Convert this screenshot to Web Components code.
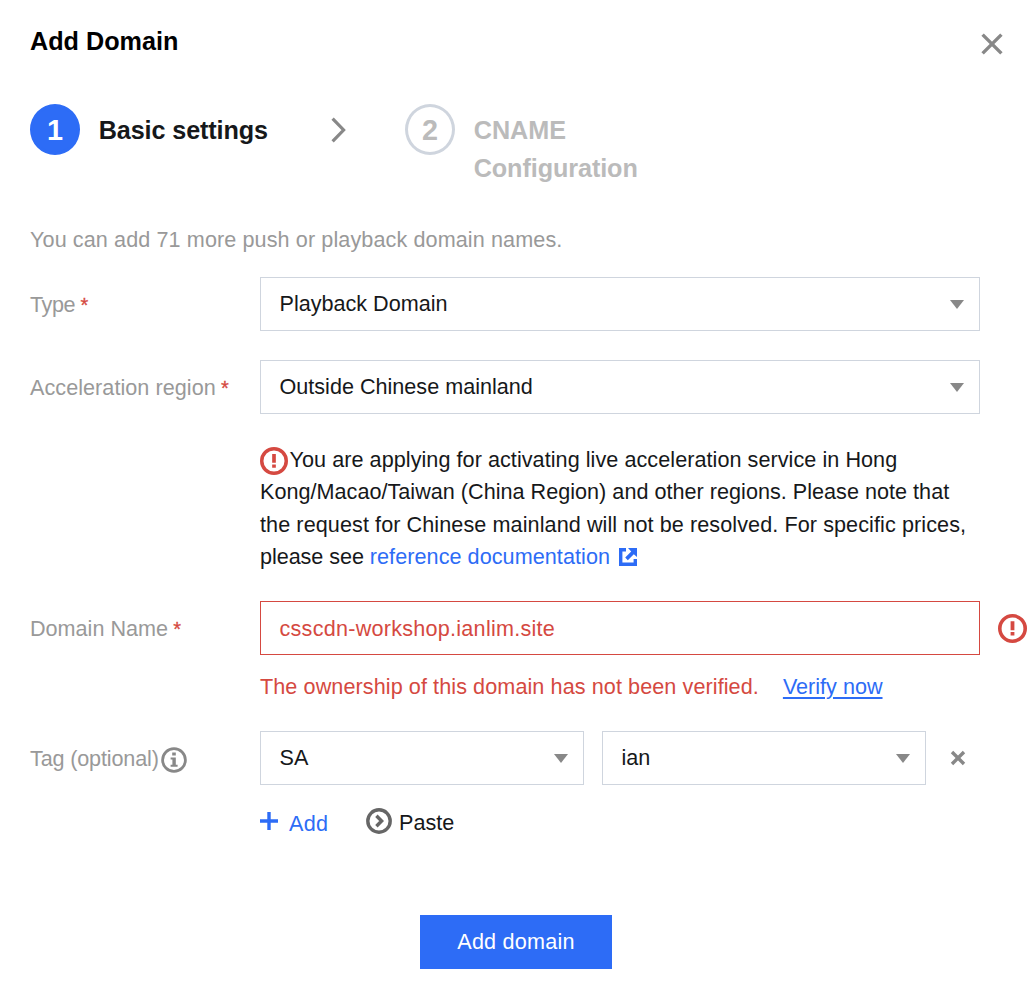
<!DOCTYPE html>
<html lang="en">
<head>
<meta charset="utf-8">
<title>Add Domain</title>
<style>
html,body{margin:0;background:#fff}
body{font:21.6px/32.4px "Liberation Sans",Arial,sans-serif;color:#16181a}
</style>
</head>
<body>
<domain-dialog></domain-dialog>
<script>
function define(name, html, setup) {
  const tpl = document.createElement('template');
  tpl.innerHTML = html;
  customElements.define(name, class extends HTMLElement {
    constructor() {
      super();
      this.attachShadow({ mode: 'open' }).appendChild(tpl.content.cloneNode(true));
    }
    connectedCallback() { if (setup) setup(this, this.shadowRoot); }
  });
}

const ICONS = {
  close: [22, 22, '<path d="M1.6 1.6 20.4 20.4M20.4 1.6 1.6 20.4" fill="none" stroke="#888" stroke-width="3.4"/>'],
  dismiss: [16, 16, '<path d="M2 2 14 14M14 2 2 14" fill="none" stroke="#888" stroke-width="3.4"/>'],
  chevron: [16, 26, '<path d="M1.6 1.6 12.6 13 1.6 24.4" fill="none" stroke="#888" stroke-width="3.2"/>'],
  caret: [14, 9, '<path d="M0 0H14L7 9Z" fill="#888"/>'],
  alert: [29, 29, '<circle cx="14.5" cy="14.5" r="12.7" fill="none" stroke="#d54941" stroke-width="3.6"/><path d="M12.6 7.2h3.8v9h-3.8zM12.6 18h3.8v3.6h-3.8z" fill="#d54941"/>'],
  info: [26, 26, '<circle cx="13" cy="13" r="11.4" fill="none" stroke="#888" stroke-width="2.8"/><path d="M11.2 5.6h3.6v3h-3.6zM9.6 10.4h5.2v7.4h1.8v2H9.6v-2h1.8v-5.4H9.6z" fill="#888"/>'],
  external: [18, 18, '<path d="M0 0h7v3.4H3.4v11.2h11.2V11H18v7H0zM9 0H18v9l-3.2-2.8-6 6-2.6-2.6 6-6z" fill="#2d6cf6"/>'],
  plus: [18, 18, '<path d="M9 0V18M0 9H18" fill="none" stroke="#2d6cf6" stroke-width="3.4"/>'],
  paste: [26, 26, '<circle cx="13" cy="13" r="11.2" fill="none" stroke="#666" stroke-width="3.4"/><path d="M10.4 7.8 15.6 13 10.4 18.2" fill="none" stroke="#666" stroke-width="3.4"/>']
};

define('ui-icon', '<style>:host{display:inline-block;flex:none;line-height:0}svg{display:block}</style><svg></svg>', (el, root) => {
  const [w, h, art] = ICONS[el.getAttribute('name')];
  const svg = root.querySelector('svg');
  svg.setAttribute('width', el.getAttribute('size') || w);
  svg.setAttribute('height', el.getAttribute('size') || h);
  svg.setAttribute('viewBox', `0 0 ${w} ${h}`);
  svg.innerHTML = art;
});

define('step-item', `<style>
:host{display:flex;font-weight:700;font-size:25.2px;line-height:37.8px;color:#bbb}
.num{box-sizing:border-box;flex:none;width:50px;height:51px;border:3px solid #cfd5de;border-radius:50%;display:flex;align-items:center;justify-content:center;font-size:28.8px;line-height:44px}
.label{padding:7.6px 0 0 18.7px}
:host([current]){color:#16181a}
:host([current]) .num{background:#2d6cf6;border-color:#2d6cf6;color:#fff}
</style><div class="num"><slot name="num"></slot></div><div class="label"><slot></slot></div>`);

define('form-row', `<style>
:host{display:flex}
.label{flex:none;width:230px;box-sizing:border-box;padding-top:12px;color:#999;display:flex;align-items:flex-start}
.body{flex:none;width:720px}
.req{display:none;color:#d54941;margin-left:5.3px;font-size:20px;-webkit-text-stroke:.3px #d54941;line-height:33px}
:host([required]) .req{display:block}
</style><div class="label"><slot name="label"></slot><span class="req">*</span></div><div class="body"><slot></slot></div><slot name="after"></slot>`);

define('ui-field', `<style>
:host{box-sizing:border-box;display:flex;align-items:center;justify-content:space-between;height:54px;border:1px solid #cfd5de;padding:0 15px 0 18.5px;line-height:52px;background:#fff}
ui-icon{margin-top:1px}
:host([invalid]){border-color:#d54941;color:#d54941;padding-top:2px}
:host([invalid]) ui-icon{display:none}
</style><slot></slot><ui-icon name="caret"></ui-icon>`);

define('ui-button', `<style>
:host{display:block;width:192px;height:54px;background:#2d6cf6;color:#fff;text-align:center;line-height:54px;letter-spacing:.22px}
</style><slot></slot>`);

define('domain-dialog', `<style>
:host{display:flex;flex-direction:column;box-sizing:border-box;width:1030px;height:996px;padding:23.4px 0 0 30px}
header{display:flex;justify-content:space-between;height:81px;color:#000;font:700 25.2px/37.8px "Liberation Sans",Arial,sans-serif}
header ui-icon{margin:10px 27.5px 0 0}
nav{display:flex;height:120px}
nav ui-icon{margin:12.6px 58px 0 62px}
nav .s1{width:239px}
span{white-space:nowrap}
.hint{color:#999;height:52.6px}
form-row{flex:none}
.type{height:83px}.region{height:241px}.domain{height:130px}.tag{height:184px}
.note{padding-top:29.9px}
.note ui-icon[name=alert]{vertical-align:2px;margin:-10px 1.5px -10px 0}
.note ui-icon[name=external]{margin-left:9px;vertical-align:-2px}
.blue{color:#2d6cf6}
.alert{margin:13px 0 0 18px}
.err{display:flex;color:#d54941;padding-top:16px}
.err a{color:#2d6cf6;margin-left:24px;text-decoration:underline;text-decoration-thickness:1.6px;text-underline-offset:3px}
.tags{display:flex;align-items:center;gap:18px}
.tags ui-field{width:324px}
.tags ui-icon{margin-left:6px}
.actions{display:flex;align-items:flex-start;padding-top:22px}
.actions ui-icon[name=plus]{margin:5px 11px 0 0}
.actions ui-icon[name=paste]{margin:1.5px 6.5px 0 38px}
.info{margin:4px 0 0 2.4px}
ui-button{margin-left:390px}
</style>
<header><span>Add Domain</span><ui-icon name="close"></ui-icon></header>
<nav>
<step-item current class="s1"><span slot="num">1</span><span style="letter-spacing:-.11px">Basic settings</span></step-item>
<ui-icon name="chevron"></ui-icon>
<step-item><span slot="num">2</span><span>CNAME</span><br><span style="letter-spacing:-.08px">Configuration</span></step-item>
</nav>
<div class="hint"><span style="letter-spacing:.1px">You can add 71 more push or playback domain names.</span></div>
<form-row required class="type"><span slot="label" style="letter-spacing:-.4px">Type</span><ui-field><span>Playback Domain</span></ui-field></form-row>
<form-row required class="region"><span slot="label" style="letter-spacing:.05px">Acceleration region</span>
<ui-field><span>Outside Chinese mainland</span></ui-field>
<div class="note"><ui-icon name="alert" size="28"></ui-icon><span style="letter-spacing:.055px">You are applying for activating live acceleration service in Hong</span><br><span style="letter-spacing:.02px">Kong/Macao/Taiwan (China Region) and other regions. Please note that</span><br><span style="letter-spacing:.085px">the request for Chinese mainland will not be resolved. For specific prices,</span><br><span style="letter-spacing:-.06px">please see </span><span class="blue" style="letter-spacing:.06px">reference documentation</span><ui-icon name="external"></ui-icon></div>
</form-row>
<form-row required class="domain"><span slot="label">Domain Name</span>
<ui-field invalid><span style="letter-spacing:.25px">csscdn-workshop.ianlim.site</span></ui-field>
<div class="err"><span style="letter-spacing:.085px">The ownership of this domain has not been verified.</span><a><span>Verify now</span></a></div>
<ui-icon slot="after" class="alert" name="alert"></ui-icon>
</form-row>
<form-row class="tag"><span slot="label" style="letter-spacing:-.15px">Tag (optional)</span><ui-icon slot="label" class="info" name="info"></ui-icon>
<div class="tags"><ui-field><span>SA</span></ui-field><ui-field><span>ian</span></ui-field><ui-icon name="dismiss"></ui-icon></div>
<div class="actions"><ui-icon name="plus"></ui-icon><span class="blue" style="letter-spacing:.35px;padding-top:.6px">Add</span><ui-icon name="paste"></ui-icon><span>Paste</span></div>
</form-row>
<ui-button><span>Add domain</span></ui-button>`);
</script>
</body>
</html>
